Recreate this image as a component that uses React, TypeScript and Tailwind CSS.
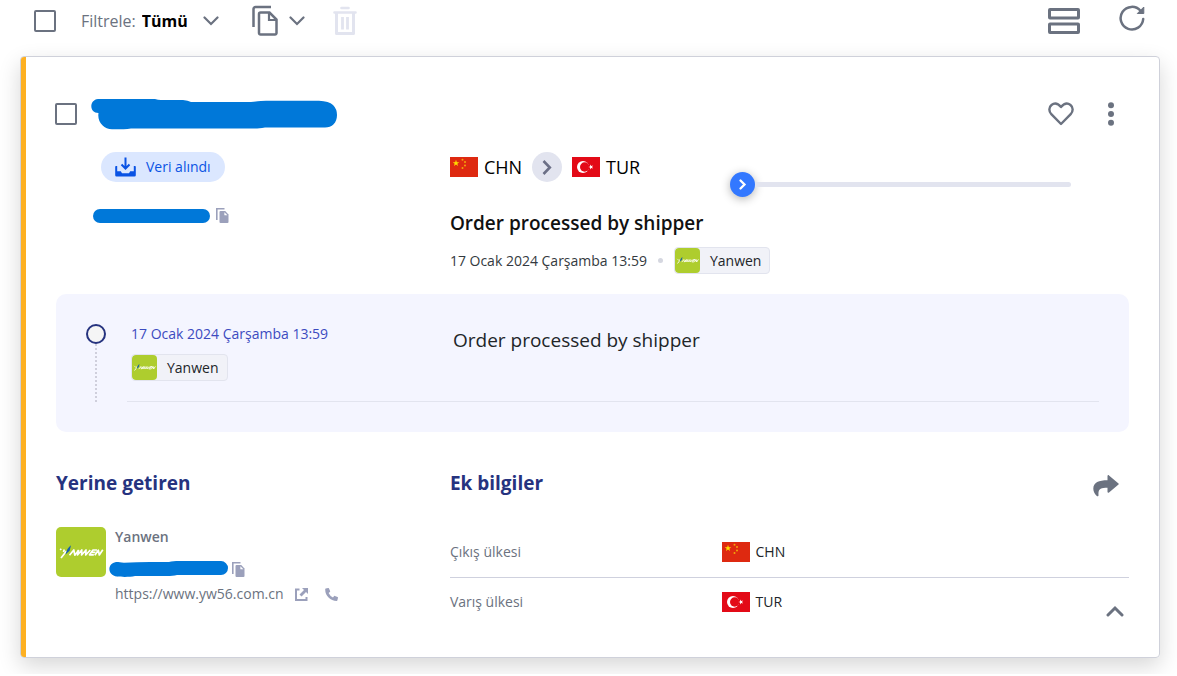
import { useState } from "react";

const CARRIER = "Yanwen";
const EVENT_DATE = "17 Ocak 2024 Çarşamba 13:59";
const EVENT_TEXT = "Order processed by shipper";

function ChevronDown({ className = "" }: { className?: string }) {
  return (
    <svg width="16" height="10" viewBox="0 0 16 10" fill="none" className={className} aria-hidden="true">
      <path d="M1.500 1.500 8 8l6.500-6.500" stroke="currentColor" strokeWidth="2.200" strokeLinecap="round" />
    </svg>
  );
}

function CopySmall() {
  return (
    <svg width="13" height="15" viewBox="0 0 13 15" fill="#9ba0bb" aria-hidden="true">
      <path d="M0 0h8.500v1.600H1.600V12H0z" />
      <path d="M4.500 3h4.700L12.500 6.400V14a1 1 0 0 1-1 1h-7a1 1 0 0 1-1-1V4a1 1 0 0 1 1-1z" />
      <path d="M8.400 4.200v3.100h3z" fill="#fff" />
    </svg>
  );
}

function YanwenLogo({ className = "" }: { className?: string }) {
  return (
    <svg viewBox="0 0 50 50" className={className} role="img" aria-label="Yanwen">
      <rect width="50" height="50" fill="#aecd2e" />
      <g fill="none" stroke="#fff" strokeWidth="1.700" strokeLinejoin="round">
        <path d="M4.200 21.800l1 1.200M8.300 22.500l-.8 2.500M5 31l5.500-7" />
        <path d="M13.500 28.200l4.300-5.200 1 5.200 4-5.200" />
        <path d="M22.500 23l-1 5 4.300-5-.2 5 4.400-5-.3 5 4.600-5" />
        <path d="M41 23h-4l-3.500 4.800h4.300M35.500 25.400h4" />
        <path d="M38.800 28.200l3.500-5 1 4.800 3.500-5.200" />
      </g>
      <path d="M9.500 27.500c.8-4 2.700-7.500 5.500-9.300l-1.400 5.600z" fill="#1460a8" />
    </svg>
  );
}

function Flag({ code }: { code: string }) {
  if (code === "CHN") {
    return (
      <svg width="28" height="20" viewBox="0 0 28 20" aria-hidden="true">
        <rect width="28" height="20" fill="#de2910" />
        <path d="M6 2.800l.8 2.400h2.500L7.300 6.700l.8 2.400L6 7.600 3.900 9.100l.8-2.400-2-1.500h2.500z" fill="#ffde00" />
        <g fill="#f2a50a">
          <circle cx="12.500" cy="2.700" r="1" />
          <circle cx="15" cy="5" r="1" />
          <circle cx="15" cy="8.500" r="1" />
          <circle cx="12.500" cy="11" r="1" />
        </g>
      </svg>
    );
  }
  return (
    <svg width="28" height="20" viewBox="0 0 28 20" aria-hidden="true">
      <rect width="28" height="20" fill="#e30a17" />
      <circle cx="11" cy="10" r="6" fill="#fff" />
      <circle cx="12.700" cy="10" r="4.700" fill="#e30a17" />
      <path d="M16.300 10l1.800-.6V7.500l1.200 1.500 1.900-.6-1.200 1.600 1.200 1.600-1.900-.6-1.200 1.500v-1.900z" fill="#fff" />
    </svg>
  );
}

function CarrierBadge() {
  return (
    <span className="inline-flex h-[27px] items-center overflow-hidden rounded border border-[#e2e4ee] bg-[#f1f2f8] pr-2 text-sm text-[#212529]">
      <YanwenLogo className="mr-2.5 size-[25px] rounded-sm" />
      {CARRIER}
    </span>
  );
}

function SelectBox({ label }: { label: string }) {
  return (
    <input
      type="checkbox"
      aria-label={label}
      className="size-[22px] shrink-0 appearance-none rounded-xs border-2 border-[#6b7280] bg-white checked:bg-[#6b7280]"
    />
  );
}

function Toolbar() {
  return (
    <div className="flex h-[42px] items-center pr-8 pl-[34px] text-[#6b7280]">
      <SelectBox label="Tümünü seç" />
      <label htmlFor="filter" className="ml-[25px] text-base">
        Filtrele:
      </label>
      <div className="relative ml-1.5 flex items-center">
        <select id="filter" className="w-[77px] appearance-none bg-transparent text-base font-bold text-black">
          <option>Tümü</option>
        </select>
        <ChevronDown className="pointer-events-none absolute right-0" />
      </div>
      <button type="button" aria-label="Kopyala" className="ml-8 flex items-center gap-2.5">
        <svg width="28" height="32" viewBox="0 0 28 32" fill="none" stroke="currentColor" aria-hidden="true">
          <path d="M2.500 22V4a2 2 0 0 1 2-2H20" strokeWidth="2.500" />
          <path
            d="M9.500 7.500h9l7 7V28a1.500 1.500 0 0 1-1.500 1.500H9.500A1.500 1.500 0 0 1 8 28V9a1.500 1.500 0 0 1 1.500-1.500z"
            strokeWidth="2.500"
          />
          <path d="M18 8v7h7" strokeWidth="2.200" />
        </svg>
        <ChevronDown />
      </button>
      <button type="button" aria-label="Sil" disabled className="ml-7 text-[#e2e4ef]">
        <svg width="24" height="30" viewBox="0 0 24 30" fill="none" stroke="currentColor" aria-hidden="true">
          <path d="M8.500 2h7M1.500 6.500h21" strokeWidth="2.600" strokeLinecap="round" />
          <path d="M3.500 7v20.500h17V7" strokeWidth="3" strokeLinejoin="round" />
          <path d="M9.500 11v12.500M14.500 11v12.500" strokeWidth="2.800" />
        </svg>
      </button>
      <button type="button" aria-label="Görünüm" className="mr-[39px] ml-auto">
        <svg width="32" height="26" viewBox="0 0 32 26" fill="none" stroke="currentColor" strokeWidth="3" aria-hidden="true">
          <rect x="1.500" y="1.500" width="29" height="8.500" rx=".5" />
          <rect x="1.500" y="16" width="29" height="8.500" rx=".5" />
        </svg>
      </button>
      <button type="button" aria-label="Yenile" className="mb-1.5">
        <svg width="26" height="28" viewBox="0 0 26 28" fill="none" aria-hidden="true">
          <path d="M21.500 6.800A11.300 11.300 0 1 0 24.200 15" stroke="currentColor" strokeWidth="2.500" strokeLinecap="round" />
          <path d="M24.800 3v6.500h-6.500z" fill="currentColor" stroke="currentColor" strokeLinejoin="round" />
        </svg>
      </button>
    </div>
  );
}

function Summary() {
  return (
    <div className="grid grid-cols-[58fr_100fr]">
      <div>
        <span className="ml-[45px] inline-flex h-[30px] items-center gap-2.5 rounded-full bg-[#dbe7ff] px-3.5 text-sm text-[#0a53e4]">
          <svg width="21" height="20" viewBox="0 0 21 20" fill="none" aria-hidden="true">
            <path d="M10.500.500V11M6.500 7.500l4 4 4-4" stroke="currentColor" strokeWidth="2" />
            <path
              d="M2.200 9H1a.8.8 0 0 0-.8.8v8.400A1.300 1.300 0 0 0 1.500 19.500h18a1.300 1.300 0 0 0 1.300-1.300V9.800A.8.8 0 0 0 20 9h-1.200v5.300h-3.600l-1.200 2H7l-1.200-2H2.200z"
              fill="currentColor"
            />
          </svg>
          Veri alındı
        </span>
        <div className="mt-[25px] ml-[37px] flex items-center gap-1.5">
          <div className="h-3.5 w-[117px] rounded-full bg-[#0078d9]" />
          <button type="button" aria-label="Numarayı kopyala">
            <CopySmall />
          </button>
        </div>
      </div>
      <div>
        <div className="grid grid-cols-[2fr_3fr]">
          <div className="flex h-[30px] items-center text-lg text-black">
            <Flag code="CHN" />
            <span className="ml-1.5">CHN</span>
            <span className="mx-2.5 flex size-[30px] shrink-0 items-center justify-center rounded-full bg-[#e2e4ef]">
              <svg width="10" height="15" viewBox="0 0 10 15" fill="none" aria-hidden="true">
                <path d="M1.500 1l6.300 6.500-6.300 6.500" stroke="#6b6f86" strokeWidth="2.600" />
              </svg>
            </span>
            <Flag code="TUR" />
            <span className="ml-1.5">TUR</span>
          </div>
          <div className="mt-5 mr-[58px] ml-2 flex items-center">
            <span className="flex size-[25px] items-center justify-center rounded-full bg-[#3378ff] shadow-[0_2px_10px_rgba(0,0,0,0.3)]">
              <svg width="9" height="13" viewBox="0 0 9 13" fill="none" aria-hidden="true">
                <path d="M2.500 2.500l4 4-4 4" stroke="#fff" strokeWidth="2.300" strokeLinecap="round" />
              </svg>
            </span>
            <div className="h-[5px] flex-1 rounded-r-full bg-[#e2e4ef]" />
          </div>
        </div>
        <h2 className="mt-3 text-[19px] leading-7 font-semibold text-[#111]">{EVENT_TEXT}</h2>
        <div className="mt-2.5 flex items-center text-sm text-[#343a40]">
          {EVENT_DATE}
          <span className="mx-[11px] size-[5px] rounded-full bg-[#d5d7e0]" />
          <CarrierBadge />
        </div>
      </div>
    </div>
  );
}

function Timeline() {
  return (
    <div className="mt-5 rounded-[10px] bg-[#f4f5ff] p-[30px]">
      <div className="flex">
        <div className="flex w-5 flex-col items-center">
          <span className="size-5 rounded-full border-2 border-[#26337f] bg-[#f5f5f5]" />
          <span className="flex-1 border-l-2 border-dotted border-[#cfcfdc]" />
        </div>
        <div className="ml-[21px] flex flex-1 border-b border-[#e2e4ef] pb-5">
          <div className="ml-1 w-[322px]">
            <p className="text-sm leading-5 text-[#3c4bc0]">{EVENT_DATE}</p>
            <div className="mt-2.5 flex">
              <CarrierBadge />
            </div>
          </div>
          <p className="mt-0.5 text-[19px] leading-7 text-[#212529]">{EVENT_TEXT}</p>
        </div>
      </div>
    </div>
  );
}

function Details() {
  return (
    <div className="mt-9 grid grid-cols-[58fr_100fr]">
      <div>
        <h3 className="text-[19px] leading-[30px] font-bold text-[#26337f]">Yerine getiren</h3>
        <div className="mt-[29px] flex items-start">
          <YanwenLogo className="size-[50px] rounded-[5px]" />
          <div className="ml-[9px] text-sm leading-5 text-[#6b7280]">
            <p className="font-semibold">{CARRIER}</p>
            <div className="mt-3.5 -ml-1.5 flex items-center gap-1">
              <svg width="119" height="16" viewBox="0 0 119 16" fill="#0078d9" aria-hidden="true">
                <path d="M7 1c2-.3 4 .6 8 .7C30 .6 45 1 60 1 64-.2 70 .2 76 .1h36a7 7 0 0 1 0 14H68c-3 .6-6 1-10 1H26c-5 1.100-13 1-18 .5C-2 14-2 2.500 7 1z" />
              </svg>
              <button type="button" aria-label="Telefonu kopyala">
                <CopySmall />
              </button>
            </div>
            <div className="mt-[7px] flex items-center">
              <a href="https://www.yw56.com.cn">https://www.yw56.com.cn</a>
              <a href="https://www.yw56.com.cn" aria-label="Siteyi aç" className="ml-[11px]">
                <svg width="13" height="13" viewBox="0 0 13 13" fill="none" aria-hidden="true">
                  <path d="M4.500 1.500H1v10.500h10.500V9" stroke="#9ba0bb" strokeWidth="2" />
                  <path d="M7 0h6v6l-2-2-4.500 4.500-2-2L9 2z" fill="#9ba0bb" />
                </svg>
              </a>
              <button type="button" aria-label="Ara" className="ml-[17px]">
                <svg width="13" height="13" viewBox="0 0 13 13" aria-hidden="true">
                  <path
                    d="M.7.600L3.200 0a.7.7 0 0 1 .8.400l1.100 2.700a.7.7 0 0 1-.2.800L3.600 5a9 9 0 0 0 4.400 4.400l1.100-1.300a.7.7 0 0 1 .8-.2l2.700 1.100a.7.7 0 0 1 .4.800l-.6 2.500a.7.7 0 0 1-.7.600A11.500 11.500 0 0 1 .200 1.300.7.7 0 0 1 .700.600z"
                    fill="#9ba0bb"
                  />
                </svg>
              </button>
            </div>
          </div>
        </div>
      </div>
      <div>
        <div className="flex items-center justify-between pr-2.5">
          <h3 className="text-[19px] leading-[30px] font-bold text-[#26337f]">Ek bilgiler</h3>
          <button type="button" aria-label="Paylaş" className="pt-1.5 text-[#6b7280]">
            <svg width="26" height="22" viewBox="0 0 26 22" fill="currentColor" aria-hidden="true">
              <path d="M14.500 1c0-.8.900-1.200 1.500-.6l9.500 8c.4.300.4.900 0 1.200l-9.500 8c-.6.500-1.500.100-1.500-.6v-4.200c-6.500 0-9.500.900-9 7.200.1 1.200-.8 1.800-1.700.9C1.800 19.300.300 16.700.300 13.800.300 7.300 6 5.200 14.500 5.200z" />
            </svg>
          </button>
        </div>
        <table className="mt-[29px] w-full table-fixed text-left text-sm">
          <tbody>
            <tr className="h-[50px] border-b border-[#cfd1de]">
              <th scope="row" className="w-2/5 font-normal text-[#6b7280]">
                Çıkış ülkesi
              </th>
              <td className="text-[#212529]">
                <span className="flex items-center gap-1.5">
                  <Flag code="CHN" /> CHN
                </span>
              </td>
            </tr>
            <tr className="h-[50px]">
              <th scope="row" className="font-normal text-[#6b7280]">
                Varış ülkesi
              </th>
              <td className="text-[#212529]">
                <span className="flex items-center gap-1.5">
                  <Flag code="TUR" /> TUR
                </span>
              </td>
            </tr>
          </tbody>
        </table>
      </div>
    </div>
  );
}

export default function App() {
  const [open, setOpen] = useState(true);

  return (
    <div className="overflow-hidden bg-white pb-4 font-['Open_Sans','Noto_Sans',sans-serif]">
      <Toolbar />
      <main className="mt-3.5 mr-[17px] ml-5 rounded border border-[#cfd1da] shadow-[0_8px_22px_rgba(0,0,0,0.16)]">
        <div className="relative rounded-l-[3px] border-l-[5px] border-[#fdb022] pt-[42px] pr-[30px] pb-[30px] pl-[30px]">
          <div className="-ml-px flex h-[30px] items-center">
            <SelectBox label="Gönderiyi seç" />
            <svg width="246" height="31" viewBox="0 0 246 31" fill="#0078d9" className="ml-3.5" aria-hidden="true">
              <path d="M7 0h57q3 .8 6 1h22q5 .6 8 2h60q10-1.200 15-1.300h53q10 .3 14 4.300 4 4 4 10c0 8-5 12.500-12 12.500h-60c-5 1-8 .9-12 .9H40c-6 .9-14 .9-19 .8C13 30 6 23 7.500 14-2 14-2 1 7 0z" />
            </svg>
            <button type="button" aria-label="Favorilere ekle" className="ml-auto text-[#6b7280]">
              <svg width="26" height="24" viewBox="0 0 26 24" fill="none" aria-hidden="true">
                <path
                  d="M13 22L3.300 12.200C.5 9.300.900 5 3.500 3 6.500.700 10 1.500 13 5c3-3.500 6.500-4.300 9.500-2 2.600 2 3 6.300.2 9.200z"
                  stroke="currentColor"
                  strokeWidth="2.400"
                  strokeLinejoin="round"
                />
              </svg>
            </button>
            <button type="button" aria-label="Menü" className="mr-3.5 ml-[33px] text-[#6b7280]">
              <svg width="8" height="24" viewBox="0 0 8 24" fill="currentColor" aria-hidden="true">
                <circle cx="4" cy="3.300" r="3" />
                <circle cx="4" cy="12" r="3" />
                <circle cx="4" cy="20.700" r="3" />
              </svg>
            </button>
          </div>
          <div className="mt-[23px]">
            <Summary />
          </div>
          {open && <Timeline />}
          {open && <Details />}
          <button
            type="button"
            aria-label={open ? "Daralt" : "Genişlet"}
            aria-expanded={open}
            onClick={() => setOpen(!open)}
            className="absolute right-[35px] bottom-10 text-[#6b7280]"
          >
            <svg width="18" height="12" viewBox="0 0 18 12" fill="none" aria-hidden="true">
              <path d="M2 10l7-7 7 7" stroke="currentColor" strokeWidth="3" strokeLinecap="round" />
            </svg>
          </button>
        </div>
      </main>
    </div>
  );
}
